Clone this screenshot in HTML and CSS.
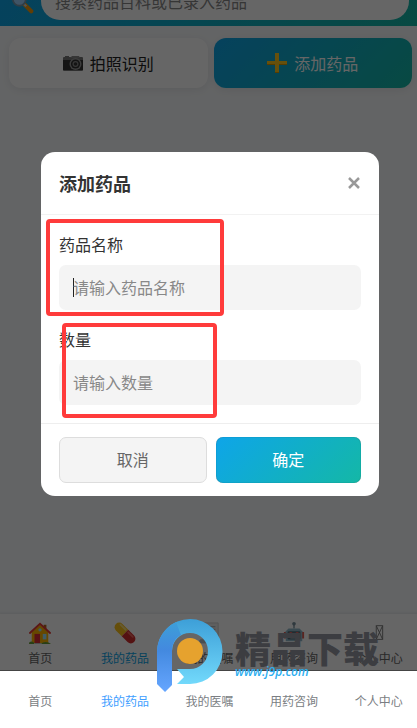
FILE: index.html
```html
<!DOCTYPE html>
<html lang="zh-CN">
<head>
    <meta charset="UTF-8">
    <meta name="viewport" content="width=device-width, initial-scale=1.0">
    <title>我的药品</title>
    <link rel="stylesheet" href="styles.css">
</head>
<body>
    <div class="page">
        <main class="app">
            <header class="search-bar">
                <svg class="search-icon" viewBox="0 0 24 24" aria-hidden="true">
                    <path d="M14 14l7 7" stroke="#f59a0c" stroke-width="4.5" stroke-linecap="round"/>
                    <path d="M12.500 12.500l3 3" stroke="#c9d3da" stroke-width="2.500"/>
                    <circle cx="8" cy="8" r="7" fill="#9fd3ff" stroke="#7898ad" stroke-width="2"/>
                </svg>
                <input class="search-input" type="search" aria-label="搜索" placeholder="搜索药品百科或已录入药品">
            </header>

            <div class="actions">
                <button class="action" type="button">
                    <svg class="action-icon" viewBox="0 0 20 20" aria-hidden="true">
                        <path d="M2 5V3h4v2z" fill="#777"/>
                        <rect x="0" y="4" width="20" height="14" rx="1" fill="#777"/>
                        <rect x="0" y="7" width="20" height="10" fill="#333"/>
                        <path d="M7 5l2-2h7l1 2z" fill="#888"/>
                        <circle cx="12.500" cy="11" r="6" fill="#9a9a9a"/>
                        <circle cx="12.500" cy="11" r="4.600" fill="#303030"/>
                        <circle cx="12.500" cy="11" r="3" fill="#888"/>
                        <circle cx="12.500" cy="11" r="1.800" fill="#333"/>
                    </svg>
                    拍照识别
                </button>
                <button class="action primary" type="button">
                    <svg class="action-icon" viewBox="0 0 20 20" aria-hidden="true">
                        <path d="M8 0h4v8h8v4h-8v8H8v-8H0V8h8z" fill="#ffc91f"/>
                        <path d="M0 11h8v1H0zM12 11h8v1h-8zM8 19h4v1H8z" fill="#d79700"/>
                    </svg>
                    添加药品
                </button>
            </div>

            <nav class="app-nav">
                <a class="nav-item" href="#home">
                    <svg class="nav-icon" viewBox="0 0 24 24" aria-hidden="true">
                        <path d="M16 3h3v5h-3z" fill="#b5651d"/>
                        <path d="M3 11l9-8 9 8v12H3z" fill="#ffb300"/>
                        <path d="M1 12L12 2l11 10" fill="none" stroke="#e53a35" stroke-width="2" stroke-linecap="round"/>
                        <rect x="6" y="13" width="6" height="10" fill="#dc2f35"/>
                        <rect x="15" y="13" width="4" height="6" fill="#9be7ff"/>
                        <circle cx="12" cy="8.500" r="1.800" fill="#9be7ff"/>
                        <path d="M0 24c0-3 3-3 5-2l1 2zM13 24c2-3 8-3 11 0z" fill="#689f38"/>
                        <path d="M6 23h7v1H6z" fill="#bdbdbd"/>
                    </svg>
                    首页
                </a>
                <a class="nav-item current" href="#drug">
                    <svg class="nav-icon" viewBox="0 0 24 24" aria-hidden="true">
                        <g transform="rotate(45 12 12)">
                            <path d="M12 7H3a5 5 0 0 0 0 10h9z" fill="#fcc21b"/>
                            <path d="M12 7h9a5 5 0 0 1 0 10h-9z" fill="#d32f2f"/>
                            <path d="M2 9h8" stroke="#ffe27a" stroke-width="2" stroke-linecap="round"/>
                            <path d="M14 9h7" stroke="#f0625a" stroke-width="2" stroke-linecap="round"/>
                        </g>
                    </svg>
                    我的药品
                </a>
                <a class="nav-item" href="#advice">
                    <svg class="nav-icon" viewBox="0 0 24 24" aria-hidden="true">
                        <path d="M6 1h16v18c0 3-1 4-4 4H4c-3 0-3-4 0-4h2z" fill="#eee" stroke="#d0d0d0"/>
                        <path d="M9 5h10M9 8h10M9 11h10M9 14h7" stroke="#b4bcc0" stroke-width="1.200"/>
                        <path d="M3 19h13c-1 2 0 4 2 4H4c-3 0-3-4-1-4z" fill="#b9c2c7"/>
                    </svg>
                    我的医嘱
                </a>
                <a class="nav-item" href="#consult">
                    <svg class="nav-icon" viewBox="0 0 24 24" aria-hidden="true">
                        <path d="M12 7V2" stroke="#78909c" stroke-width="1.500"/>
                        <circle cx="12" cy="2" r="2" fill="#78909c"/>
                        <path d="M1 11h3v7H1zM20 11h3v7h-3z" fill="#e05a50"/>
                        <path d="M6 7h12l3 3v11H3V10z" fill="#8fb7c9"/>
                        <rect x="5" y="10" width="14" height="9" rx="1" fill="#546e7a"/>
                        <circle cx="8.500" cy="13" r="2" fill="#ff6059"/>
                        <circle cx="15.500" cy="13" r="2" fill="#ff6059"/>
                        <path d="M8 17h8" stroke="#e7f1f5" stroke-width="1.500"/>
                    </svg>
                    用药咨询
                </a>
                <a class="nav-item" href="#me">
                    <svg class="nav-icon" viewBox="0 0 24 24" aria-hidden="true">
                        <path d="M9 4h7v15H9zM9 4l7 15M16 4L9 19" fill="none" stroke="#777" stroke-width="1"/>
                    </svg>
                    个人中心
                </a>
            </nav>

            <!-- 添加药品弹窗 -->
            <div class="mask">
                <form class="dialog" role="dialog" aria-labelledby="dialog-title">
                    <div class="dialog-head">
                        <h2 id="dialog-title">添加药品</h2>
                        <button class="close" type="button" aria-label="关闭">
                            <svg viewBox="0 0 12 12" aria-hidden="true">
                                <path d="M1 1l10 10M11 1L1 11" stroke="#999" stroke-width="2.500"/>
                            </svg>
                        </button>
                    </div>
                    <div class="dialog-body">
                        <div class="field">
                            <label for="drug-name">药品名称</label>
                            <input class="active" id="drug-name" type="text" placeholder="请输入药品名称">
                        </div>
                        <div class="field">
                            <label for="drug-count">数量</label>
                            <input id="drug-count" type="text" placeholder="请输入数量">
                        </div>
                    </div>
                    <div class="dialog-foot">
                        <button class="btn" type="button">取消</button>
                        <button class="btn ok" type="submit">确定</button>
                    </div>
                </form>
            </div>
        </main>

        <nav class="tab-bar">
            <a href="#home">首页</a>
            <a class="current" href="#drug">我的药品</a>
            <a href="#advice">我的医嘱</a>
            <a href="#consult">用药咨询</a>
            <a href="#me">个人中心</a>
        </nav>

        <!-- 标注框 -->
        <div class="mark mark-name"></div>
        <div class="mark mark-count"></div>

        <!-- 水印 -->
        <div class="watermark">
            <svg class="logo" viewBox="0 0 66 74" aria-hidden="true">
                <defs>
                    <linearGradient id="ring" x1="0" y1="0" x2="0" y2="1">
                        <stop offset="0" stop-color="#3d9fd8"/>
                        <stop offset="1" stop-color="#72d9fb"/>
                    </linearGradient>
                    <linearGradient id="stem" x1="0" y1="0" x2="0" y2="1">
                        <stop offset="0" stop-color="#3d9fd8"/>
                        <stop offset=".4" stop-color="#4389df"/>
                        <stop offset="1" stop-color="#66a6ff"/>
                    </linearGradient>
                </defs>
                <path d="M33 0A32.500 32.500 0 0 1 33 65H20l7-7-7-8h13A18 18 0 1 0 15 32L0 33A33 33 0 0 1 33 0z" fill="url(#ring)"/>
                <path d="M0 33C0 20 8 8 19 3L24 16C18 19 15 25 15 32V66l-7 7-8-8z" fill="url(#stem)"/>
                <circle cx="33" cy="32" r="13" fill="#e6a22e"/>
            </svg>
            <div class="brand">
                <strong>精品下载</strong>
                <span>www.j9p.com</span>
            </div>
        </div>
    </div>
</body>
</html>
```
FILE: styles.css
```css
* {
    margin: 0;
    padding: 0;
    box-sizing: border-box;
}

body {
    font-family: "Noto Sans CJK SC", "Noto Sans", sans-serif;
    font-size: 16px;
    color: #333;
    background-color: #fff;
}

a {
    color: inherit;
    text-decoration: none;
}

button,
input {
    font: inherit;
    border: none;
    outline: none;
}

.page {
    position: relative;
    display: flex;
    flex-direction: column;
    min-height: 100vh;
    overflow: hidden;
}

.app {
    position: relative;
    flex: 1;
    display: flex;
    flex-direction: column;
    overflow: hidden;
    background-color: #f8fafc;
}

/* 顶部搜索 */
.search-bar {
    display: flex;
    align-items: flex-end;
    gap: 7px;
    height: 26px;
    padding: 0 8px 6px 12px;
    overflow: hidden;
    background: linear-gradient(135deg, #0ea5e9, #14b8a6);
}

.search-icon {
    flex: none;
    width: 22px;
    height: 34px;
}

.search-input {
    flex: 1;
    min-width: 0;
    height: 38px;
    padding: 0 14px;
    border-radius: 19px;
    background-color: #fff;
}

.search-input::placeholder {
    color: #888;
}

.actions {
    display: flex;
    gap: 6px;
    padding: 12px 5px 12px 9px;
}

.action {
    flex: 1;
    display: flex;
    align-items: center;
    justify-content: center;
    gap: 7px;
    height: 50px;
    border-radius: 12px;
    color: #222;
    background-color: #fff;
    box-shadow: 0 2px 8px rgba(0, 0, 0, .08);
}

.action.primary {
    color: #fff;
    background: linear-gradient(135deg, #0ea5e9, #14b8a6);
}

.action-icon {
    width: 20px;
    height: 20px;
}

/* 页面内导航 */
.app-nav {
    display: flex;
    height: 56px;
    margin: auto -4px 0 -2px;
    padding-top: 8px;
    background-color: #fff;
    box-shadow: 0 -1px 3px rgba(0, 0, 0, .08);
}

.nav-item {
    flex: 1;
    display: flex;
    flex-direction: column;
    align-items: center;
    gap: 5px;
    font-size: 12px;
    line-height: 18px;
    color: #666;
}

.nav-item.current {
    color: #0ea5e9;
}

.nav-icon {
    width: 22px;
    height: 22px;
}

/* 弹窗 */
.mask {
    position: absolute;
    inset: 0;
    padding: 152px 38px 0 41px;
    background-color: rgba(0, 0, 0, .6);
}

.dialog {
    border-radius: 14px;
    background-color: #fff;
}

.dialog-head {
    display: flex;
    align-items: center;
    justify-content: space-between;
    height: 63px;
    padding: 0 17px 0 18px;
    border-bottom: 1px solid #f2f2f2;
}

.dialog-head h2 {
    font-size: 18px;
    font-weight: bold;
}

.close {
    display: flex;
    padding: 2px;
    background: none;
}

.close svg {
    width: 12px;
    height: 12px;
}

.dialog-body {
    display: flex;
    flex-direction: column;
    gap: 18px;
    padding: 18px;
}

.field {
    display: flex;
    flex-direction: column;
    gap: 10px;
}

.field label {
    line-height: 22px;
}

.field input {
    width: 100%;
    height: 45px;
    padding: 0 14px 2px;
    border-radius: 7px;
    background-color: #f4f4f4;
}

.field input::placeholder {
    color: #888;
}

/* 输入光标 */
.field input.active {
    background-image: linear-gradient(#222, #222);
    background-repeat: no-repeat;
    background-size: 1px 19px;
    background-position: 14px center;
}

.dialog-foot {
    display: flex;
    gap: 9px;
    padding: 13px 18px;
    border-top: 1px solid #eee;
}

.btn {
    flex: 1;
    height: 46px;
    padding-bottom: 2px;
    border: 1px solid #ddd;
    border-radius: 7px;
    color: #666;
    background-color: #f4f4f4;
}

.btn.ok {
    border: none;
    color: #fff;
    background: linear-gradient(135deg, #0ea5e9, #14b8a6);
    box-shadow: inset 0 0 1px rgba(0, 0, 0, .5);
}

/* 底部标签栏 */
.tab-bar {
    display: flex;
    align-items: center;
    height: 58px;
    margin: 0 -4px 0 -2px;
    padding-top: 2px;
    border-top: 1px solid #444;
    font-size: 12px;
    color: #7a7e83;
    background-color: #fff;
}

.tab-bar a {
    flex: 1;
    text-align: center;
}

.tab-bar .current {
    color: #409eff;
}

/* 红色标注 */
.mark {
    position: absolute;
    border: 4px solid #ff3b3b;
    border-radius: 4px;
}

.mark-name {
    left: 46px;
    top: 219px;
    width: 178px;
    height: 97px;
}

.mark-count {
    left: 62px;
    top: 323px;
    width: 155px;
    height: 95px;
}

.watermark {
    position: absolute;
    left: 157px;
    bottom: 35px;
    display: flex;
    gap: 12px;
    pointer-events: none;
}

.logo {
    width: 66px;
    height: 74px;
}

.brand {
    display: flex;
    flex-direction: column;
    padding-top: 10px;
    font-style: italic;
    white-space: nowrap;
}

.brand strong {
    font-size: 36px;
    font-style: oblique 8deg;
    font-weight: 900;
    line-height: 36px;
    color: #3c3d41;
}

.brand span {
    font-family: "Open Sans", sans-serif;
    font-size: 12px;
    font-weight: 600;
    line-height: 14px;
    color: #2caef0;
}
```
